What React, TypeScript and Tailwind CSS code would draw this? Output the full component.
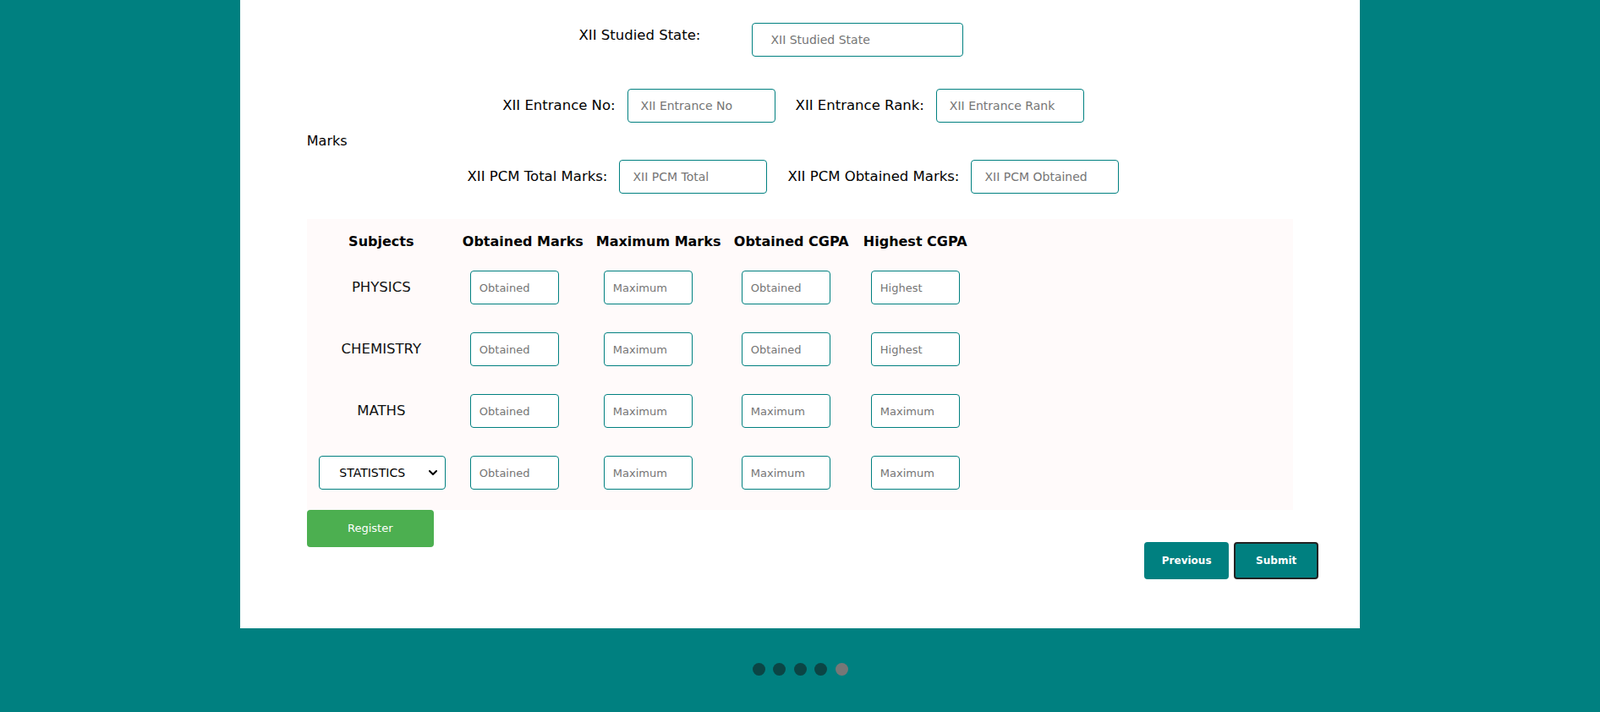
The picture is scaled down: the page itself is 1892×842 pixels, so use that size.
import { ChevronDown } from "lucide-react";

const subjects = ["PHYSICS", "CHEMISTRY", "MATHS"];

const rowHolders = [
  ["Obtained", "Maximum", "Obtained", "Highest"],
  ["Obtained", "Maximum", "Obtained", "Highest"],
  ["Obtained", "Maximum", "Maximum", "Maximum"],
  ["Obtained", "Maximum", "Maximum", "Maximum"],
];

const Field = ({ label, holder, w }: { label: string; holder: string; w: string }) => {
  return (
    <div className="flex items-center">
      <span className="mr-[14px] text-[16.5px] text-black">{label}</span>
      <input
        placeholder={holder}
        className={`${w} h-[40px] rounded-[4px] border border-[#008080] bg-white px-[15px] text-[14px] outline-none placeholder:text-[#757575]`}
      />
    </div>
  );
};

const Cell = ({ holder }: { holder: string }) => {
  return (
    <div className="pl-[17px]">
      <input
        placeholder={holder}
        className="w-[105px] h-[40px] rounded-[4px] border border-[#008080] bg-white px-[10px] text-[13px] outline-none placeholder:text-[#757575]"
      />
    </div>
  );
};

export default function App() {
  return (
    <div className="min-h-screen bg-[#008080] font-['DejaVu_Sans',sans-serif] text-black">
      <div className="mx-auto w-[70%] bg-white px-[79px] pt-[27px] pb-[58px]">
        <div className="flex justify-center pr-[68px]">
          <div className="flex items-center">
            <span className="mb-[9px] mr-[61px] text-[16.5px]">XII Studied State:</span>
            <input
              placeholder="XII Studied State"
              className="w-[250px] h-[40px] rounded-[4px] border border-[#008080] px-[21px] text-[14px] outline-none placeholder:text-[#757575]"
            />
          </div>
        </div>

        <div className="mt-[38px] flex justify-center gap-[24px] pr-[16px]">
          <Field label="XII Entrance No:" holder="XII Entrance No" w="w-[175px]" />
          <Field label="XII Entrance Rank:" holder="XII Entrance Rank" w="w-[175px]" />
        </div>

        <div className="mt-[12px] text-[16px] leading-[19px]">Marks</div>

        <div className="mt-[13px] flex justify-center gap-[24px] pr-[16px]">
          <Field label="XII PCM Total Marks:" holder="XII PCM Total" w="w-[175px]" />
          <Field label="XII PCM Obtained Marks:" holder="XII PCM Obtained" w="w-[175px]" />
        </div>

        <div className="mt-[30px] bg-[#fffafa] pt-[17px] pb-[24px]">
          <div className="grid grid-cols-[176px_158px_163px_153px_140px] h-[20px] items-center text-[16px] font-bold leading-[20px]">
            <div className="text-center">Subjects</div>
            <div className="pl-[8px] whitespace-nowrap">Obtained Marks</div>
            <div className="pl-[8px] whitespace-nowrap">Maximum Marks</div>
            <div className="pl-[8px] whitespace-nowrap">Obtained CGPA</div>
            <div className="pl-[8px] whitespace-nowrap">Highest CGPA</div>
          </div>

          <div className="mt-[24px] flex flex-col gap-[33px]">
            {rowHolders.map((holders, i) => (
              <div key={i} className="grid grid-cols-[176px_158px_163px_153px_140px] items-center">
                {i < subjects.length ? (
                  <div className="text-center text-[16.5px] text-[#111]">{subjects[i]}</div>
                ) : (
                  <div className="flex justify-center pl-[3px]">
                    <div className="relative w-[150px] h-[40px]">
                      <select className="h-full w-full appearance-none rounded-[4px] border border-[#008080] bg-white pl-[23px] text-[14px] text-black outline-none">
                        <option>STATISTICS</option>
                        <option>COMPUTER SCIENCE</option>
                        <option>BIOLOGY</option>
                      </select>
                      <ChevronDown
                        size={16}
                        strokeWidth={3}
                        className="pointer-events-none absolute right-[7px] top-[12px] text-black"
                      />
                    </div>
                  </div>
                )}
                {holders.map((h, j) => (
                  <Cell key={j} holder={h} />
                ))}
              </div>
            ))}
          </div>
        </div>

        <div className="flex items-start justify-between">
          <button className="w-[150px] h-[44px] rounded-[4px] bg-[#4caf50] text-[13px] text-white">
            Register
          </button>
          <div className="mt-[38px] -mr-[30px] flex gap-[6px]">
            <button className="w-[100px] h-[44px] rounded-[4px] bg-[#008080] text-[12px] font-bold text-white">
              Previous
            </button>
            <button className="w-[100px] h-[44px] rounded-[4px] border-2 border-[#222] bg-[#008080] text-[12px] font-bold text-white">
              Submit
            </button>
          </div>
        </div>
      </div>

      <div className="mt-[41px] flex justify-center gap-[9.5px] pb-[43px]">
        <span className="h-[15px] w-[15px] rounded-full bg-[#0b4545]" />
        <span className="h-[15px] w-[15px] rounded-full bg-[#0b4545]" />
        <span className="h-[15px] w-[15px] rounded-full bg-[#0b4545]" />
        <span className="h-[15px] w-[15px] rounded-full bg-[#0b4545]" />
        <span className="h-[15px] w-[15px] rounded-full bg-[#777777]" />
      </div>
    </div>
  );
}
